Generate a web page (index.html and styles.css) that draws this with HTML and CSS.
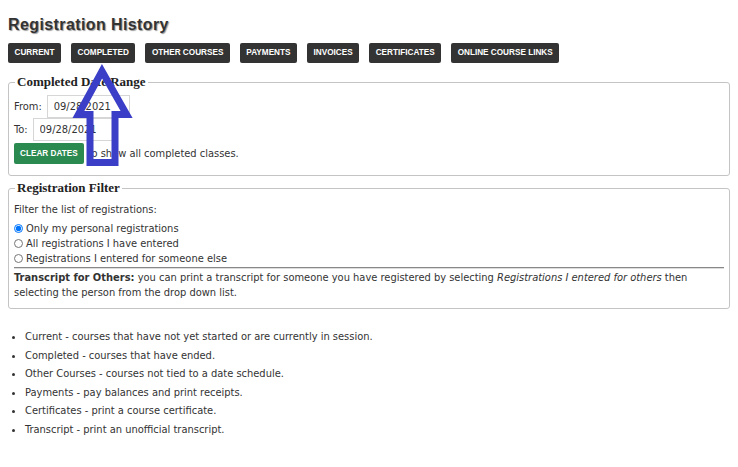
FILE: index.html
```html
<!DOCTYPE html>
<html lang="en">

<head>
    <meta charset="UTF-8">
    <meta name="viewport" content="width=device-width, initial-scale=1.0">
    <title>Registration History</title>
    <link rel="stylesheet" href="styles.css">
</head>

<body>
    <h2 class="page-title">Registration History</h2>

    <!-- tab buttons -->
    <nav class="tabs">
        <a class="tab" href="#">CURRENT</a>
        <a class="tab" href="#">COMPLETED</a>
        <a class="tab" href="#">OTHER COURSES</a>
        <a class="tab" href="#">PAYMENTS</a>
        <a class="tab" href="#">INVOICES</a>
        <a class="tab" href="#">CERTIFICATES</a>
        <a class="tab" href="#">ONLINE COURSE LINKS</a>
    </nav>

    <!-- date range -->
    <fieldset class="panel panel-dates">
        <legend>Completed Date Range</legend>
        <div class="date-row">
            <label for="date-from">From:</label>
            <input type="text" id="date-from" value="09/28/2021">
        </div>
        <div class="date-row">
            <label for="date-to">To:</label>
            <input type="text" id="date-to" value="09/28/2021">
        </div>
        <div class="clear-row">
            <button type="button" class="btn-green">CLEAR DATES</button>
            <span>to show all completed classes.</span>
        </div>
    </fieldset>

    <!-- registration filter -->
    <fieldset class="panel panel-filter">
        <legend>Registration Filter</legend>
        <p class="filter-intro">Filter the list of registrations:</p>
        <label class="radio-row"><input type="radio" name="filter" checked> Only my personal registrations</label>
        <label class="radio-row"><input type="radio" name="filter"> All registrations I have entered</label>
        <label class="radio-row"><input type="radio" name="filter"> Registrations I entered for someone else</label>
        <hr>
        <p class="transcript-note"><b>Transcript for Others:</b> you can print a transcript for someone you have registered by selecting <i>Registrations I entered for others</i> then selecting the person from the drop down list.</p>
    </fieldset>

    <ul class="help-list">
        <li>Current - courses that have not yet started or are currently in session.</li>
        <li>Completed - courses that have ended.</li>
        <li>Other Courses - courses not tied to a date schedule.</li>
        <li>Payments - pay balances and print receipts.</li>
        <li>Certificates - print a course certificate.</li>
        <li>Transcript - print an unofficial transcript.</li>
    </ul>

    <!-- pointer arrow over the COMPLETED tab -->
    <svg class="arrow" width="70" height="110" viewBox="0 0 70 110">
        <path d="M32 11.3 L8.4 54.5 L20 54.5 L20 102.5 L45 102.5 L45 54.5 L56.6 54.5 Z" fill="none" stroke="#3b3ec6" stroke-width="7"/>
    </svg>
</body>

</html>
```

FILE: styles.css
```css
/* page */
body {
    font-family: "DejaVu Sans Condensed", "DejaVu Sans", sans-serif;
    font-stretch: condensed;
    font-size: 11px;
    color: #333;
    background-color: #fff;
    margin: 8px;
}

.page-title {
    font-family: "Liberation Sans", Arial, sans-serif;
    font-size: 16px;
    font-weight: bold;
    letter-spacing: 0.4px;
    color: #333;
    text-shadow: 1px 1px 1px #999;
    margin: 7px 0 0;
    line-height: 20px;
}

/* tabs */
.tabs {
    display: flex;
    gap: 10px;
    margin-top: 8px;
}

.tab {
    display: block;
    background-color: #333;
    color: #fff;
    font-family: "Liberation Sans", Arial, sans-serif;
    font-size: 8.2px;
    font-weight: bold;
    line-height: 20px;
    padding: 0 6.5px;
    border-radius: 2px;
    text-decoration: none;
}

/* fieldsets */
.panel {
    border: 1px solid #c4c4c4;
    border-radius: 3px;
    margin: 0;
    padding: 0 5px 11px;
}

.panel-dates {
    margin-top: 11px;
}

.panel-filter {
    margin-top: 4px;
    padding-bottom: 8px;
}

.panel legend {
    font-family: "Liberation Serif", "Times New Roman", serif;
    font-weight: bold;
    font-size: 13px;
    color: #222;
    padding: 0 2px;
    margin-left: 1px;
}

.date-row {
    display: flex;
    align-items: center;
    gap: 5px;
}

.date-row:first-of-type {
    margin-top: 5px;
}

.date-row input {
    width: 83px;
    box-sizing: border-box;
    height: 23px;
    border: 1px solid #d6d6d6;
    padding: 0 6px;
    font-family: inherit;
    font-stretch: condensed;
    font-size: 11px;
    color: #333;
}

.clear-row {
    display: flex;
    align-items: center;
    gap: 4px;
    margin-top: 2px;
}

.btn-green {
    background-color: #2b8a50;
    color: #fff;
    border: none;
    border-radius: 2px;
    font-family: "Liberation Sans", Arial, sans-serif;
    font-size: 8.2px;
    font-weight: bold;
    height: 21px;
    padding: 0 6px;
}

/* filter */
.filter-intro {
    margin: 7px 0 5px;
}

.radio-row {
    display: flex;
    align-items: center;
    height: 15px;
}

.radio-row input {
    width: 9px;
    height: 9px;
    margin: 0 3px 0 0;
}

.panel hr {
    margin: 1px 0 2px;
    border: none;
    border-top: 1px solid #888;
    border-bottom: 1px solid #ddd;
}

.transcript-note {
    margin: 0;
    line-height: 14.5px;
}

/* help list */
.help-list {
    margin: 19px 0 0;
    padding-left: 17px;
    line-height: 18.6px;
}

.arrow {
    position: absolute;
    left: 70px;
    top: 60px;
    pointer-events: none;
}
```
